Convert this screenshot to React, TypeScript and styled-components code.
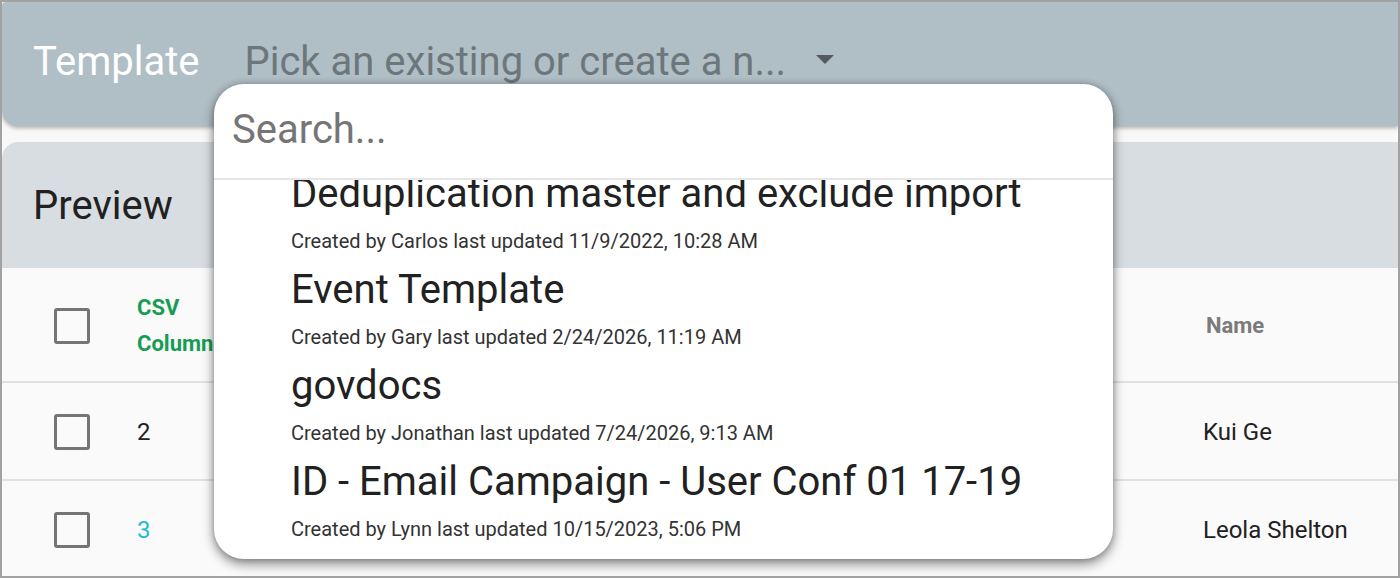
import React, { useLayoutEffect, useRef } from "react"
import styled, { createGlobalStyle } from "styled-components"

const GlobalStyle = createGlobalStyle`
    html, body {
        margin: 0;
        padding: 0;
        font-family: Roboto, "Noto Sans", "Liberation Sans", sans-serif;
        background: #ffffff;
    }
    * {
        box-sizing: border-box;
    }
`

const Frame = styled.div`
    position: relative;
    width: 1400px;
    height: 578px;
    border: 2px solid #a2a2a2;
    background: #f8f8f8;
    overflow: hidden;
`

const TopBar = styled.div`
    display: flex;
    align-items: center;
    gap: 45px;
    height: 124px;
    padding: 0 31px 6px 31px;
    background: #b0bec5;
    border-radius: 4px 0 0 16px;
    box-shadow: 0 2px 4px rgba(0, 0, 0, 0.3);
`

const BarLabel = styled.span`
    font-size: 40px;
    color: #ffffff;
`

const Select = styled.div`
    display: flex;
    align-items: center;
    gap: 30px;
    cursor: pointer;
`

const SelectValue = styled.span`
    font-size: 40px;
    color: #6d777b;
    white-space: nowrap;
`

const Caret = styled.svg`
    width: 18px;
    height: 9px;
    margin-top: -4px;
    fill: #535b5f;
`

const PreviewCard = styled.div`
    margin-top: 16px;
    border-radius: 16px 0 0 0;
    overflow: hidden;
    background: #fafafa;
`

const PreviewHeader = styled.div`
    display: flex;
    align-items: center;
    height: 126px;
    padding-left: 31px;
    background: #d8dde1;
    font-size: 40px;
    color: #212121;
`

const Row = styled.div<{ $height: number }>`
    display: grid;
    grid-template-columns: 135px 1066px 1fr;
    align-items: center;
    height: ${({ $height }) => $height}px;
    padding-top: 2px;
    border-bottom: 2px solid #e0e0e0;
`

const Checkbox = styled.span`
    display: block;
    width: 36px;
    height: 36px;
    margin-left: 52px;
    border: 3px solid #757575;
    border-radius: 3px;
`

const HeadCell = styled.div<{ $color: string; $width?: number; $indent?: number }>`
    font-size: 22px;
    font-weight: 700;
    line-height: 36px;
    color: ${({ $color }) => $color};
    padding-left: ${({ $indent }) => $indent || 0}px;
    ${({ $width }) => $width && `width: ${$width}px;`}
`

const Cell = styled.div<{ $color?: string }>`
    font-size: 24px;
    color: ${({ $color }) => $color || "#212121"};
`

const Popup = styled.div`
    position: absolute;
    left: 212px;
    top: 82px;
    width: 899px;
    height: 475px;
    display: flex;
    flex-direction: column;
    background: #ffffff;
    border-radius: 30px;
    overflow: hidden;
    box-shadow: 0 5px 12px rgba(0, 0, 0, 0.45), 0 0 6px rgba(0, 0, 0, 0.2);
`

const SearchInput = styled.input`
    flex: none;
    height: 96px;
    width: 100%;
    padding: 0 18px 4px 18px;
    border: none;
    border-bottom: 2px solid #e6e6e6;
    outline: none;
    font-family: inherit;
    font-size: 40px;
    color: #212121;
    background: transparent;
    &::placeholder {
        color: #757575;
    }
`

const OptionList = styled.div`
    flex: 1;
    padding-bottom: 12px;
    overflow-y: auto;
    scrollbar-width: none;
    &::-webkit-scrollbar {
        display: none;
    }
`

const Option = styled.div`
    padding: 0 0 17px 77px;
    cursor: pointer;
`

const OptionTitle = styled.div`
    font-size: 40px;
    line-height: 40px;
    color: #212121;
    white-space: nowrap;
`

const OptionMeta = styled.div`
    margin-top: 15px;
    font-size: 20px;
    line-height: 24px;
    color: #333333;
    white-space: nowrap;
`

const templates = [
    { name: "Deduplication master and exclude import", author: "Carlos", updated: "11/9/2022, 10:28 AM" },
    { name: "Event Template", author: "Gary", updated: "2/24/2026, 11:19 AM" },
    { name: "govdocs", author: "Jonathan", updated: "7/24/2026, 9:13 AM" },
    { name: "ID - Email Campaign - User Conf 01 17-19", author: "Lynn", updated: "10/15/2023, 5:06 PM" },
]

const rows = [
    { id: "2", name: "Kui Ge", color: "#212121" },
    { id: "3", name: "Leola Shelton", color: "#22b8d8" },
]

export default function App() {
    const listRef = useRef<HTMLDivElement>(null)

    useLayoutEffect(() => {
        if (listRef.current) listRef.current.scrollTop = 6
    }, [])

    return (
        <>
            <GlobalStyle />
            <Frame>
                <TopBar>
                    <BarLabel>Template</BarLabel>
                    <Select>
                        <SelectValue>Pick an existing or create a n...</SelectValue>
                        <Caret viewBox="0 0 18 9">
                            <path d="M0 0 L18 0 L9 9 Z" />
                        </Caret>
                    </Select>
                </TopBar>
                <PreviewCard>
                    <PreviewHeader>Preview</PreviewHeader>
                    <Row $height={115}>
                        <Checkbox />
                        <HeadCell $color="#169c55" $width={90}>CSV Column</HeadCell>
                        <HeadCell $color="#7b7b7b" $indent={3}>Name</HeadCell>
                    </Row>
                    {rows.map((r) => (
                        <Row key={r.id} $height={98}>
                            <Checkbox />
                            <Cell $color={r.color}>{r.id}</Cell>
                            <Cell>{r.name}</Cell>
                        </Row>
                    ))}
                </PreviewCard>
                <Popup>
                    <SearchInput placeholder="Search..." />
                    <OptionList ref={listRef}>
                        {templates.map((t) => (
                            <Option key={t.name}>
                                <OptionTitle>{t.name}</OptionTitle>
                                <OptionMeta>Created by {t.author} last updated {t.updated}</OptionMeta>
                            </Option>
                        ))}
                    </OptionList>
                </Popup>
            </Frame>
        </>
    )
}
